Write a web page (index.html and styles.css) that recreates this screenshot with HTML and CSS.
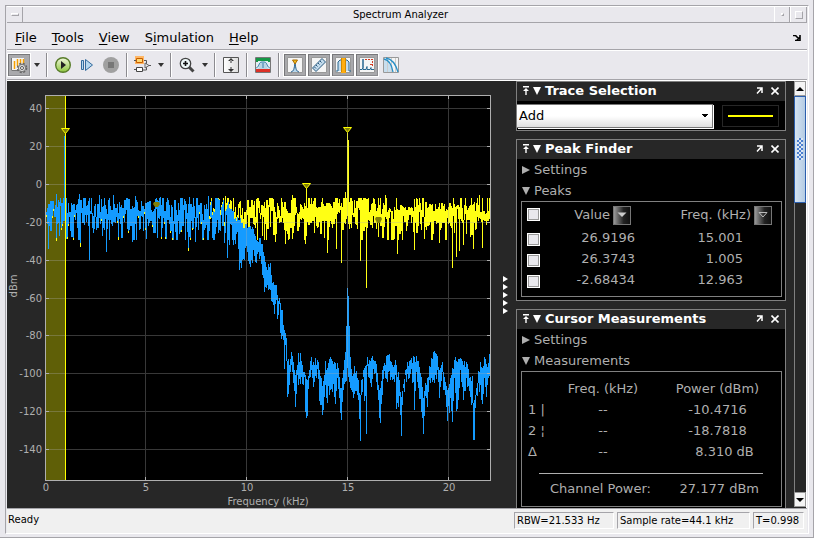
FILE: index.html
```html
<!DOCTYPE html>
<html lang="en">
<head>
<meta charset="utf-8">
<title>Spectrum Analyzer</title>
<link rel="stylesheet" href="styles.css">
</head>
<body>
<div class="window">
  <header class="titlebar">
    <button class="wm wm-menu" aria-label="Window menu"><i></i></button>
    <h1>Spectrum Analyzer</h1>
    <button class="wm wm-min" aria-label="Minimize"><i></i></button>
    <button class="wm wm-max" aria-label="Maximize"><i></i></button>
  </header>

  <nav class="menubar">
    <button><u>F</u>ile</button>
    <button><u>T</u>ools</button>
    <button><u>V</u>iew</button>
    <button>S<u>i</u>mulation</button>
    <button><u>H</u>elp</button>
    <button class="dock" aria-label="Dock"><svg width="8" height="6" viewBox="0 0 8 6"><path d="M0 .5H2.500L5.500 3.500M7 0V5.500H2M4 5L7 2" fill="none" stroke="#000" stroke-width="1.600"/></svg></button>
  </nav>

  <div class="toolbar">
    <button class="tool on" aria-label="Configuration"><svg width="18" height="18" viewBox="0 0 18 18"><path d="M1 2h13v13H1z" fill="#f4f4f4"/><path d="M1.500 2v12.500H9" fill="none" stroke="#777"/><path d="M4.500 13V5M7.500 10V3M10.500 8V3M13.500 8V3" stroke="#f6a000" stroke-width="1.500"/><circle cx="12" cy="12" r="4.300" fill="none" stroke="#666" stroke-width="2" stroke-dasharray="2 1.400"/><circle cx="12" cy="12" r="3.600" fill="#ddd" stroke="#777"/><circle cx="12" cy="12" r="1.500" fill="#fff" stroke="#555"/></svg></button>
    <button class="drop" aria-label="Configuration options"></button>
    <span class="sep"></span>
    <button class="tool" aria-label="Run"><svg width="18" height="18" viewBox="0 0 18 18"><defs><linearGradient id="run" x2="0" y2="1"><stop stop-color="#f2f7df"/><stop offset="1" stop-color="#8cc63c"/></linearGradient></defs><circle cx="9" cy="9" r="7.300" fill="url(#run)" stroke="#587c2a" stroke-width="1.400"/><path d="M7 5l5 4-5 4z" fill="#222"/></svg></button>
    <button class="tool" aria-label="Step forward"><svg width="14" height="14" viewBox="0 0 14 14"><path d="M1.500 2.500h2v9h-2zM5.500 1.500l7 5.500-7 5.500z" fill="#b5d7ef" stroke="#336a9c"/></svg></button>
    <button class="tool" aria-label="Stop"><svg width="18" height="18" viewBox="0 0 18 18"><circle cx="9" cy="9" r="8" fill="#a0a0a0"/><path d="M6 6h6v6H6z" fill="#777"/></svg></button>
    <span class="sep"></span>
    <button class="tool" aria-label="Highlight block"><svg width="18" height="18" viewBox="0 0 18 18"><path d="M8 4.500h4.500v4M9 14h3.500v-4M14 9.500h3" fill="none" stroke="#555"/><path d="M2 1h7v6H2z" fill="none" stroke="#ffb765" stroke-width="2"/><path d="M2.500 2.500h6v4h-6z" fill="#ffd873" stroke="#c55d00"/><path d="M2.500 11.500h6v4h-6z" fill="#fff" stroke="#444"/><path d="M11 7l4 2.500-4 2.500z" fill="#eee" stroke="#666"/><path d="M0 13.500h2M0 4.500h2" stroke="#555"/></svg></button>
    <button class="drop" aria-label="Highlight options"></button>
    <span class="sep"></span>
    <button class="tool" aria-label="Zoom"><svg width="16" height="16" viewBox="0 0 16 16"><path d="M10 10l4.500 4.500" stroke="#444" stroke-width="3"/><circle cx="6.500" cy="6.500" r="5.200" fill="#eef8f8" stroke="#444" stroke-width="1.300"/><path d="M4 6.500h5M6.500 4v5" stroke="#111" stroke-width="1.600"/></svg></button>
    <button class="drop" aria-label="Zoom options"></button>
    <span class="sep"></span>
    <button class="tool" aria-label="Autoscale"><svg width="16" height="16" viewBox="0 0 16 16"><defs><linearGradient id="fit"><stop stop-color="#fff"/><stop offset="1" stop-color="#ddd"/></linearGradient></defs><path d="M.5.5h15v15H.5z" fill="url(#fit)" stroke="#555"/><path d="M8 1l3 3H5zM8 15l3-3H5zM7.500 3v3h1V3zM7.500 10v3h1v-3z" fill="#333"/></svg></button>
    <span class="sep"></span>
    <button class="tool" aria-label="Spectral mask"><svg width="16" height="16" viewBox="0 0 16 16"><path d="M0 0h16v16H0z" fill="#e4eef4"/><path d="M0 1h16v4h-3V4H3v1H0z" fill="#159746"/><path d="M0 12h16v3H0z" fill="#dc3026"/><path d="M2 12c3-1 2-6 5-7h2c3 1 2 6 5 7z" fill="#b9d5e5"/><path d="M0 11c5 0 3-6 7-6h2c4 0 2 6 7 6M8 6v5" fill="none" stroke="#397fac"/><path d="M.5.5h15v15H.5z" fill="none" stroke="#777"/></svg></button>
    <span class="sep"></span>
    <button class="tool on" aria-pressed="true" aria-label="Peak finder"><svg width="16" height="16" viewBox="0 0 16 16"><path d="M.5.5h15v15H.5z" fill="#f5f5f5" stroke="#999"/><path d="M4 15c3-1 3-3 4-9 1 6 1 8 4 9" fill="#b9d8ed" stroke="#255e8c"/><path d="M5.500 3h5L8 7z" fill="#f6bd16" stroke="#a66900"/></svg></button>
    <button class="tool on" aria-pressed="true" aria-label="Cursor measurements"><svg width="16" height="16" viewBox="0 0 16 16"><path d="M.5.5h15v15H.5z" fill="#f5f5f5" stroke="#999"/><path d="M1.500 11L11 1.500 14.500 5 5 14.500z" fill="#c3dbec" stroke="#27577d"/><path d="M5 8l1.500 1.500M7 6l1.500 1.500M9 4l1.500 1.500M3.500 10L5 11.500" stroke="#27577d"/></svg></button>
    <button class="tool on" aria-pressed="true" aria-label="Channel measurements"><svg width="16" height="16" viewBox="0 0 16 16"><path d="M.5.5h15v15H.5z" fill="#f5f5f5" stroke="#999"/><path d="M1 14h2V5l2-2h7l2 2v9h2" fill="#c3dbec" stroke="#27678f"/><path d="M6 1h5v15H6z" fill="#ffae10"/><path d="M6.500 1v14M10.500 1v14" stroke="#d18a00"/></svg></button>
    <button class="tool on" aria-pressed="true" aria-label="Distortion measurements"><svg width="16" height="16" viewBox="0 0 16 16"><path d="M.5.5h15v15H.5z" fill="#f5f5f5" stroke="#999"/><path d="M1 12.500h2l1-2V2v10.500h3l1-3v3h3l1-2v2h3" fill="none" stroke="#27678f"/><path d="M6 2.500h8M13.500 4v5M11 7.500h2" stroke="#d33a22" stroke-dasharray="2 1"/></svg></button>
    <button class="tool" aria-label="CCDF measurements"><svg width="16" height="16" viewBox="0 0 16 16"><path d="M.5.5h15v15H.5z" fill="#f5f5f5" stroke="#999"/><path d="M1 1c5 1 8 6 9 14H1z" fill="#c7deee"/><path d="M4.500 1v14M8.500 1v14M12.500 1v14" stroke="#ccc"/><path d="M1 2c5 1 8 7 9 13M3 1c6 1 10 7 12 14" fill="none" stroke="#268fc6" stroke-width="1.300"/></svg></button>
  </div>

  <main class="work">
    <svg class="plot" id="plot" viewBox="7 81 493 427" role="img" aria-label="Spectrum plot">
      <rect x="45" y="95" width="446" height="386" fill="#000"/>
      <rect x="46" y="96" width="19" height="384" fill="#5f5f07"/>
      <g id="traces" shape-rendering="crispEdges"></g>
      <g id="grid" shape-rendering="crispEdges"></g>
      <path d="M65.500 96V480" stroke="#ff0"/>
      <g fill="#80800a" stroke="#ff0">
        <path d="M61.500 128.500h8l-4 5z"/><path d="M302.500 183.500h8l-4 5z"/><path d="M343.500 127.500h8l-4 5z"/>
      </g>
      <path d="M154 202h5l1 2-2 3h-3l-2-3zM376 217h5l1 2-2 4h-3l-2-4z" fill="#80800a"/>
      <g id="labels" class="ticks"></g>
      <text class="axis" x="268" y="505" text-anchor="middle">Frequency (kHz)</text>
      <text class="axis" transform="translate(17 286) rotate(-90)" text-anchor="middle">dBm</text>
    </svg>

    <div class="splitter"><i></i><i></i><i></i><i></i><i></i></div>

    <aside class="side">
      <section class="panel">
        <header class="head">
          <svg class="pin" width="6" height="9" viewBox="0 0 6 9"><path d="M0 0h6v1.500H0zM3 2l3 3H3.700v4H2.300V5H0z"/></svg><i class="tri down"></i>
          <h2>Trace Selection</h2>
          <button aria-label="Undock"><svg width="7" height="7" viewBox="0 0 7 7"><path d="M1 1h5v5M6 1L1 6.500" fill="none" stroke="#fff" stroke-width="1.500"/></svg></button>
          <button aria-label="Close"><svg width="8" height="8" viewBox="0 0 8 8"><path d="M.5.5l7 7M7.500.5l-7 7" stroke="#fff" stroke-width="1.600"/></svg></button>
        </header>
        <div class="trace">
          <select aria-label="Trace"><option>Add</option></select>
          <div class="sample"><i></i></div>
        </div>
      </section>

      <section class="panel">
        <header class="head">
          <svg class="pin" width="6" height="9" viewBox="0 0 6 9"><path d="M0 0h6v1.500H0zM3 2l3 3H3.700v4H2.300V5H0z"/></svg><i class="tri down"></i>
          <h2>Peak Finder</h2>
          <button aria-label="Undock"><svg width="7" height="7" viewBox="0 0 7 7"><path d="M1 1h5v5M6 1L1 6.500" fill="none" stroke="#fff" stroke-width="1.500"/></svg></button>
          <button aria-label="Close"><svg width="8" height="8" viewBox="0 0 8 8"><path d="M.5.5l7 7M7.500.5l-7 7" stroke="#fff" stroke-width="1.600"/></svg></button>
        </header>
        <button class="fold"><i class="tri right"></i>Settings</button>
        <button class="fold"><i class="tri down"></i>Peaks</button>
        <div class="group">
          <table class="peaks">
            <thead><tr><th><input type="checkbox" aria-label="All peaks"></th><th>Value<button class="sort" aria-label="Sort by value"><svg width="10" height="6" viewBox="0 0 10 6"><path d="M.5.5h9L5 5z" fill="#ccc"/></svg></button></th><th>Freq. (kHz)<button class="sort" aria-label="Sort by frequency"><svg width="10" height="6" viewBox="0 0 10 6"><path d="M1 .5h8L5 5z" fill="none" stroke="#bbb"/></svg></button></th></tr></thead>
            <tbody>
              <tr><td><input type="checkbox" aria-label="Peak 1"></td><td>26.9196</td><td>15.001</td></tr>
              <tr><td><input type="checkbox" aria-label="Peak 2"></td><td>26.3743</td><td>1.005</td></tr>
              <tr><td><input type="checkbox" aria-label="Peak 3"></td><td>-2.68434</td><td>12.963</td></tr>
            </tbody>
          </table>
        </div>
      </section>

      <section class="panel">
        <header class="head">
          <svg class="pin" width="6" height="9" viewBox="0 0 6 9"><path d="M0 0h6v1.500H0zM3 2l3 3H3.700v4H2.300V5H0z"/></svg><i class="tri down"></i>
          <h2>Cursor Measurements</h2>
          <button aria-label="Undock"><svg width="7" height="7" viewBox="0 0 7 7"><path d="M1 1h5v5M6 1L1 6.500" fill="none" stroke="#fff" stroke-width="1.500"/></svg></button>
          <button aria-label="Close"><svg width="8" height="8" viewBox="0 0 8 8"><path d="M.5.5l7 7M7.500.5l-7 7" stroke="#fff" stroke-width="1.600"/></svg></button>
        </header>
        <button class="fold"><i class="tri right"></i>Settings</button>
        <button class="fold"><i class="tri down"></i>Measurements</button>
        <div class="group">
          <table class="cursors">
            <thead><tr><th></th><th>Freq. (kHz)</th><th>Power (dBm)</th></tr></thead>
            <tbody>
              <tr><th>1 |</th><td>--</td><td>-10.4716</td></tr>
              <tr><th>2 ¦</th><td>--</td><td>-18.7818</td></tr>
              <tr><th>Δ</th><td>--</td><td class="delta">8.310 dB</td></tr>
            </tbody>
          </table>
          <hr>
          <p class="channel"><span>Channel Power:</span><span>27.177 dBm</span></p>
        </div>
      </section>
    </aside>

    <div class="scroll">
      <button aria-label="Scroll up"><i class="up"></i></button>
      <div class="track"><div class="thumb"><i></i></div></div>
      <button aria-label="Scroll down"><i class="dn"></i></button>
    </div>
  </main>

  <footer class="status">
    <span class="ready">Ready</span>
    <span class="field rbw">RBW=21.533 Hz</span>
    <span class="field rate">Sample rate=44.1 kHz</span>
    <span class="field time">T=0.998</span>
  </footer>
</div>
<script src="plot.js"></script>
</body>
</html>
```

FILE: plot.js
```js
const LEFT = 46, RIGHT = 490;
let state = 77123;
function rnd() {
  state = (state + 0x6D2B79F5) | 0;
  let t = Math.imul(state ^ (state >>> 15), 1 | state);
  t = (t + Math.imul(t ^ (t >>> 7), 61 | t)) ^ t;
  return ((t ^ (t >>> 14)) >>> 0) / 4294967296;
}

// Level of one noise sample, as a y position.
function noise() {
  const power = -(Math.log(rnd() + 1e-6) * 0.75 + Math.log(rnd() + 1e-6) * 0.25);
  return Math.min(240, Math.max(198, 211 - 30 * Math.log10(power)));
}

// Noise floor: one [top, bottom] pair for each column.
const yellow = {}, blue = {};
let last = 212;
for (let x = LEFT; x < RIGHT; x++) {
  const samples = [last, noise(), noise(), noise()];
  last = samples[3];
  const top = Math.min(...samples), bottom = Math.max(...samples);
  yellow[x] = [top, bottom];
  if (x < 232) {
    const drop = Math.max(0, x - 217) * 0.4;
    const gap = x > 205 && rnd() < 0.4 ? 3 : 0;
    blue[x] = [top + drop + gap, bottom + drop - (rnd() < 0.15 ? 2 : 0)];
  }
}

const yellowLows = [[264,240],[275,242],[285,244],[305,244],[327,253],[336,249],[341,263],[360,261],[366,288],[378,237],[397,254],[402,240],[414,250],[439,243],[452,268],[456,257],[459,251],[463,245],[473,249],[482,248],[188,251],[80,247],[118,240],[56,241],[161,239]];
const yellowTops = [[292,195],[345,192],[385,195],[479,195],[256,199],[225,196],[306,186],[347,133],[348,140]];
const blueLows = [[48,249],[56,238],[73,238],[80,243],[89,260],[102,236],[106,252],[118,237],[132,242],[146,239],[157,238],[161,237],[188,248],[195,242],[227,258]];
const blueTops = [[56,194],[64,136],[79,194],[99,195],[113,195],[135,196],[160,197],[189,197],[208,196]];
yellowLows.forEach(([x, y]) => yellow[x][1] = y);
yellowTops.forEach(([x, y]) => yellow[x][0] = y);
blueLows.forEach(([x, y]) => blue[x][1] = y);
blueTops.forEach(([x, y]) => blue[x][0] = y);

// Roll-off and stop band: [x, top, bottom].
const stop = [[232,211,240],[235,218,244],[237,217,232],[239,220,270],[242,223,260],[245,224,248],[247,228,252],[250,226,267],[253,229,250],[256,240,263],[258,242,252],[260,238,256],[262,244,275],[264,256,292],[267,270,285],[270,263,290],[272,283,302],[274,285,314],[276,285,300],[277,295,319],[279,298,304],[280,303,333],[282,310,336],[283,325,340],[284,330,369],[285,333,345],[286,338,361],[287,361,397],[289,365,385],[291,352,365],[292,356,372],[294,370,391],[295,375,407],[297,365,375],[298,353,385],[301,361,377],[304,372,377],[305,375,412],[307,380,416],[309,370,378],[311,357,370],[313,362,387],[315,358,376],[317,360,369],[319,370,401],[322,386,415],[324,375,397],[325,361,385],[327,368,403],[328,363,386],[330,357,390],[333,364,384],[335,363,404],[337,363,378],[339,377,398],[341,388,420],[343,370,390],[345,352,382],[347,288,368],[348,296,377],[350,357,388],[352,376,392],[354,366,394],[356,371,391],[358,380,400],[360,395,441],[361,380,395],[363,370,377],[366,365,434],[367,357,366],[369,360,378],[371,358,387],[373,360,369],[375,361,373],[377,373,390],[379,390,418],[380,388,423],[382,370,395],[384,363,371],[386,356,379],[388,355,372],[389,354,371],[391,362,377],[393,367,379],[395,360,375],[396,365,409],[399,380,396],[401,397,436],[403,384,388],[405,370,375],[407,362,374],[409,361,378],[411,358,369],[414,357,410],[416,356,372],[418,361,388],[421,377,412],[423,398,434],[425,383,396],[427,378,407],[429,366,380],[431,358,378],[434,351,383],[437,356,370],[439,370,398],[442,362,372],[445,382,395],[447,390,421],[450,378,398],[452,368,422],[454,360,378],[456,361,411],[458,359,400],[460,358,370],[463,365,400],[466,362,378],[468,369,386],[470,377,397],[472,376,403],[473,403,440],[474,400,440],[476,388,395],[478,371,383],[480,362,385],[482,368,404],[484,357,378],[486,364,397],[488,363,378],[489,354,376]];
stop.forEach(([x, top, bottom], i) => {
  blue[x] = [top, bottom];
  const next = stop[i + 1];
  if (!next) return;
  for (let c = x + 1; c < next[0]; c++) {
    const a = (top + next[1]) / 2 + rnd() * 10 - 4;
    const b = (bottom + next[2] + Math.min(bottom, next[2])) / 3 + rnd() * 12 - 3;
    blue[c] = [a, Math.max(b, a + 13)];
  }
});

// Neighbouring columns always touch, so the trace reads as one line.
function trace(cols, color) {
  let d = "", end = null;
  for (const x in cols) {
    let [a, b] = cols[x].map(Math.round);
    if (end !== null && a > end) a = end;
    d += `M${+x}.5 ${a}V${b}`;
    end = b;
  }
  return `<path d="${d}" stroke="${color}" fill="none"/>`;
}
document.getElementById("traces").innerHTML = trace(yellow, "#ffff14") + trace(blue, "#149bff");

const xs = [[0,45],[5,145],[10,246],[15,347],[20,448]];
let lines = "", ticks = "", labels = "";
xs.forEach(([v, x]) => {
  if (v) {
    lines += `M${x}.5 96V480`;
    ticks += `M${x}.5 96V99M${x}.5 477V480`;
  }
  labels += `<text x="${x + 1}" y="491" text-anchor="middle">${v}</text>`;
});
for (let i = 0; i < 10; i++) {
  const y = 108 + Math.round(i * 37.9);
  lines += `M46 ${y}.5H490`;
  ticks += `M46 ${y}.5H49M487 ${y}.5H490`;
  labels += `<text x="42" y="${y + 4}" text-anchor="end">${40 - i * 20}</text>`;
}
document.getElementById("grid").innerHTML =
  `<path d="${lines}" stroke="#afafaf" stroke-opacity=".32"/><path d="${ticks}M45.500 95.500H490.500V480.500H45.500Z" stroke="#afafaf" fill="none"/>`;
document.getElementById("labels").innerHTML = labels;
```

FILE: styles.css
```css
* { box-sizing: border-box; }
body {
  margin: 0;
  height: 100vh;
  padding: 5px 4px 3px 5px;
  background: #e9e8ed;
  border-right: 1px solid #a5a4a9;
  border-bottom: 1px solid #a5a4a9;
  font: 13px/21px "DejaVu Sans", sans-serif;
  color: #000;
  overflow: hidden;
}
h1, h2, p { margin: 0; font-size: inherit; }
button {
  padding: 0;
  border: 0;
  background: none;
  font: inherit;
  color: inherit;
}
svg { display: block; }

.window {
  display: flex;
  flex-direction: column;
  height: 100%;
  border: 1px solid #a5a4a9;
  border-right-color: #fff;
  border-bottom-color: #fff;
  padding: 0 1px;
}

.titlebar {
  display: flex;
  height: 17px;
  flex: none;
  border-top: 1px solid #fff;
  border-bottom: 1px solid #a5a4a9;
}
.titlebar h1 {
  flex: 1;
  padding-left: 4px;
  text-align: center;
  font-size: 10px;
  line-height: 15px;
  font-weight: normal;
}
.wm {
  display: grid;
  place-items: center;
  width: 16px;
  border-right: 1px solid #a5a4a9;
}
.wm i {
  border: 1px solid #fff;
  border-right-color: #a5a4a9;
  border-bottom-color: #a5a4a9;
}
.wm-menu i { width: 8px; height: 3px; }
.wm-min, .wm-max { border-left: 1px solid #fff; }
.wm-min i {
  width: 3px;
  height: 3px;
}
.wm-max i {
  width: 8px;
  height: 8px;
}
.wm-max { width: 17px; }

.menubar {
  display: flex;
  flex: none;
  gap: 15px;
  height: 28px;
  padding: 2px 6px 0 8px;
  border-bottom: 1px solid #fff;
  box-shadow: inset 0 -1px #a5a4a9;
}
.menubar u { text-underline-offset: 2px; }
.dock { margin-left: auto; }

.toolbar {
  display: flex;
  flex: none;
  align-items: center;
  height: 30px;
  padding-bottom: 2px;
  border-bottom: 1px solid #fff;
  box-shadow: inset 0 -1px #a5a4a9;
}
.tool {
  display: grid;
  place-items: center;
  width: 24px;
  height: 24px;
}
.tool.on {
  background: #a9a9ac;
  border: 1px solid #fff;
  box-shadow: inset 1px 1px #77777a, inset -1px -1px #8c8c90;
}
.drop {
  display: grid;
  place-items: center;
  width: 12px;
  height: 24px;
}
.drop::after {
  content: "";
  border: solid transparent;
  border-width: 4px 3px 0;
  border-top-color: #333;
}
.sep {
  width: 2px;
  height: 24px;
  margin: 0 3px;
  background: #8c8b90;
  border-right: 1px solid #fff;
}

.work {
  display: flex;
  flex: 1;
  min-height: 0;
  background: #272727;
}
.plot { flex: 1; min-width: 0; height: 100%; }
.ticks, .axis { font-size: 10px; fill: #afafaf; }
.splitter {
  display: flex;
  flex-direction: column;
  justify-content: center;
  gap: 2px;
  width: 16px;
  padding-left: 3px;
}
.splitter i {
  width: 5px;
  border: solid transparent;
  border-width: 3px 0 3px 5px;
  border-left-color: #fff;
}

.side {
  display: flex;
  flex-direction: column;
  gap: 8px;
  width: 270px;
  overflow: hidden;
  color: #afafaf;
}
.panel {
  flex: none;
  background: #000;
  border: 1px solid #808080;
}
.head {
  display: flex;
  align-items: center;
  gap: 8px;
  height: 19px;
  padding: 0 6px 2px 6px;
  background: #272727;
  color: #fff;
}
.pin { fill: #fff; }
.head h2 { flex: 1; line-height: 17px; margin-left: -4px; }
.head .tri { margin-left: -4px; }
.tri { border: solid transparent; flex: none; }
.tri.down { border-width: 8px 4px 0; border-top-color: currentColor; }
.tri.right { border-width: 4px 0 4px 8px; border-left-color: currentColor; }

.trace {
  display: flex;
  align-items: center;
  gap: 9px;
  height: 29px;
  padding-right: 6px;
}
.trace select {
  flex: 1;
  height: 24px;
  padding: 0 2px;
  appearance: none;
  border: 1px solid #777;
  border-left: 0;
  border-radius: 0;
  box-shadow: 1px 1px #fff;
  font: inherit;
  color: #000;
  background:
    conic-gradient(from -45deg at 50% 100%, #000 90deg, transparent 0) right 3px center / 8px 4px no-repeat,
    linear-gradient(#fff 50%, #e0e0e0);
}
.sample {
  display: grid;
  align-items: center;
  width: 57px;
  height: 22px;
  padding: 0 5px;
  border: 1px solid #272727;
}
.sample i { height: 2px; background: #ff0; }

.fold {
  display: flex;
  align-items: center;
  gap: 4px;
  width: 100%;
  height: 21px;
  padding-left: 5px;
}
.group { margin: 0 3px 3px 4px; border: 1px solid #808080; }
table { width: 100%; table-layout: fixed; border-collapse: collapse; }
th, td { padding: 0; height: 21px; font-weight: normal; line-height: 19px; }
th:first-child { width: 30px; }

.peaks { margin-bottom: 6px; }
.peaks th { height: 25px; }
.peaks th, .peaks td { text-align: right; }
.peaks th:first-child, .peaks td:first-child { padding-left: 5px; text-align: left; }
.peaks th:nth-child(2) { width: 83px; padding-right: 4px; white-space: nowrap; }
.peaks th:nth-child(3) { padding-right: 9px; }
.peaks td:nth-child(3) { padding-right: 38px; }
.peaks input {
  display: block;
  width: 13px;
  height: 13px;
  margin: 0;
  appearance: none;
  background: #e9e8ed;
  border: 1px solid #fff;
  box-shadow: inset -1px -1px #999, inset 1px 1px #999;
}
.peaks td input { margin-top: 3px; }
.sort {
  display: inline-grid;
  place-items: center;
  width: 18px;
  height: 19px;
  margin-left: 3px;
  vertical-align: middle;
  border: 1px solid #777;
  background: linear-gradient(to right, #999, #222 60%, #111);
}

.cursors { margin-top: 6px; }
.cursors tbody th:first-child { padding-left: 6px; text-align: left; white-space: pre; }
.cursors th, .cursors td { text-align: center; }
.cursors th:nth-child(2) { width: 102px; }
.cursors .delta { padding-left: 14px; }
hr { margin: 11px 18px 4px 17px; border: 0; border-top: 1px solid #afafaf; }
.channel { display: flex; justify-content: space-between; padding: 0 22px 7px 28px; }

.scroll {
  display: flex;
  flex-direction: column;
  width: 13px;
  margin-left: 8px;
  padding-bottom: 1px;
  border-right: 1px solid #fff;
}
.scroll button {
  display: grid;
  place-items: center;
  flex: none;
  height: 15px;
  border: 1px solid #999;
  background: #f4f4f4;
}
.scroll button i { border: solid transparent; }
.scroll .up { border-width: 0 4px 4px; border-bottom-color: #000; }
.scroll .dn { border-width: 4px 4px 0; border-top-color: #000; }
.track { flex: 1; border-left: 1px solid #808080; }
.thumb {
  display: grid;
  place-items: center;
  height: 27%;
  margin-left: -1px;
  border: 1px solid #2c5fae;
  background: linear-gradient(to right, #d6e4f2, #b4cbe3);
}
.thumb i {
  width: 6px;
  height: 22px;
  background: repeating-conic-gradient(#4c7fd0 0 25%, #dbe7f5 0 50%) 0 0 / 4px 4px;
}

.status {
  display: flex;
  flex: none;
  gap: 3px;
  height: 25px;
  padding: 3px 3px 4px 1px;
  border-top: 1px solid #a5a4a9;
  background: #f0f0f0;
  font-size: 10px;
  line-height: 15px;
}
.ready { flex: 1; }
.field {
  padding-left: 2px;
  border: 1px solid #a5a4a9;
  border-right-color: #fff;
  border-bottom-color: #fff;
  white-space: nowrap;
}
.rbw { width: 100px; }
.rate { width: 133px; }
.time { width: 51px; }
```
